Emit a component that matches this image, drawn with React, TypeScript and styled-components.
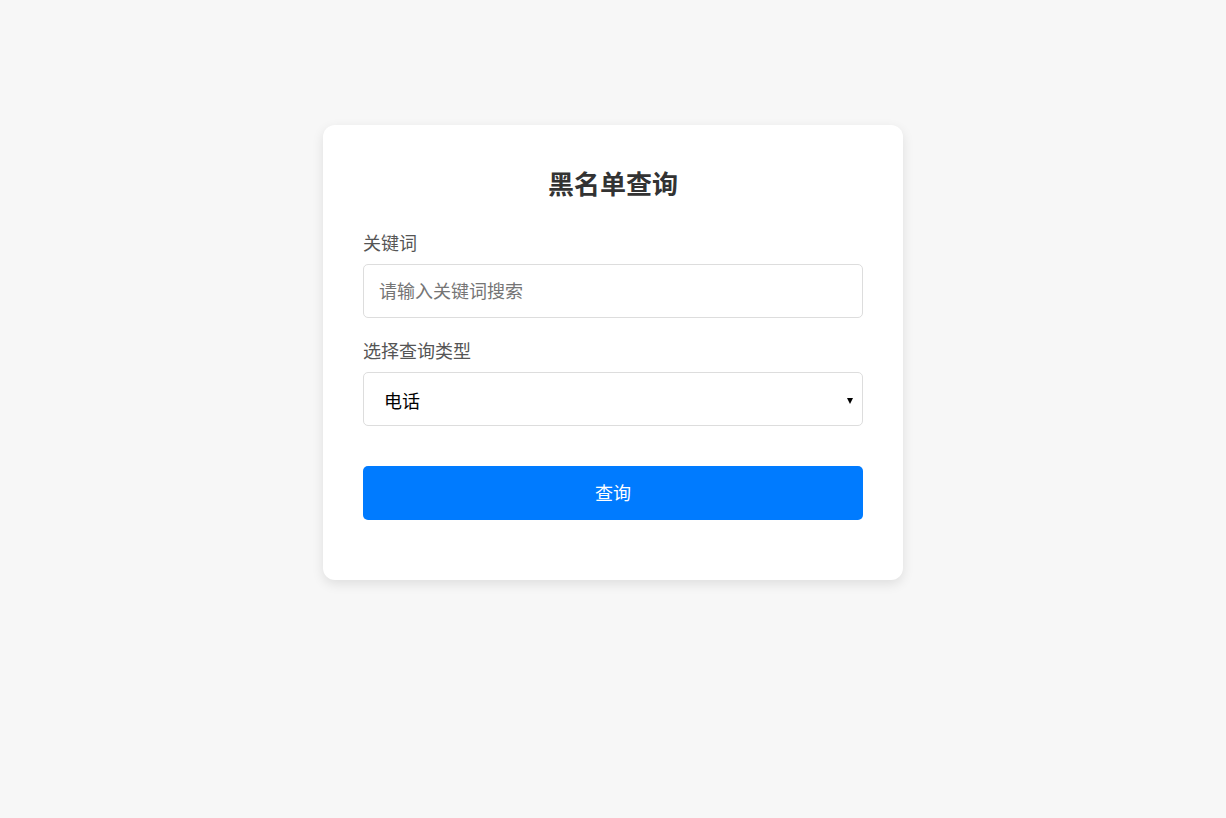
import React, { useState } from 'react';
import styled, { createGlobalStyle } from 'styled-components';

const GlobalStyle = createGlobalStyle`
  * {
    box-sizing: border-box;
  }

  body {
    margin: 0;
    background-color: #f7f7f7;
    font-family: "Noto Sans CJK SC", "Noto Sans", sans-serif;
  }
`;

const Page = styled.div`
  display: flex;
  justify-content: center;
  align-items: flex-start;
  min-height: 818px;
  padding-top: 125px;
`;

const Card = styled.div`
  width: 580px;
  padding: 40px 40px 60px;
  background-color: #fff;
  border-radius: 12px;
  box-shadow: 0 4px 12px rgba(0, 0, 0, 0.1);
`;

const Title = styled.h2`
  margin: 0 0 27px;
  text-align: center;
  font-size: 26px;
  line-height: 36px;
  font-weight: 700;
  color: #333;
`;

const FormGroup = styled.div`
  display: flex;
  flex-direction: column;
  gap: 8px;
  margin-bottom: 18px;
`;

const Label = styled.label`
  font-size: 18px;
  line-height: 28px;
  color: #555;
`;

const TextInput = styled.input`
  width: 100%;
  height: 54px;
  padding: 0 16px 3px 15px;
  border: 1px solid #ddd;
  border-radius: 5px;
  font-family: inherit;
  font-size: 18px;
  color: #333;
  outline: none;

  &::placeholder {
    color: #757575;
  }
`;

const SelectWrap = styled.div`
  position: relative;

  &::after {
    content: '';
    position: absolute;
    right: 10px;
    top: 26px;
    border-left: 3px solid transparent;
    border-right: 3px solid transparent;
    border-top: 6px solid #000;
    pointer-events: none;
  }
`;

const Select = styled.select`
  width: 100%;
  height: 54px;
  padding: 2px 24px 0 20px;
  border: 1px solid #ddd;
  border-radius: 5px;
  background-color: #fff;
  appearance: none;
  font-family: inherit;
  font-size: 18px;
  color: #000;
  outline: none;
`;

const SubmitButton = styled.button`
  width: 100%;
  height: 54px;
  margin-top: 22px;
  padding: 0 0 2px;
  border: none;
  border-radius: 5px;
  background-color: #007bff;
  color: #fff;
  font-family: inherit;
  font-size: 18px;
  cursor: pointer;

  &:hover {
    background-color: #0069d9;
  }
`;

const App: React.FC = () => {
  const [keyword, setKeyword] = useState('');
  const [type, setType] = useState('phone');

  return (
    <>
      <GlobalStyle />
      <Page>
        <Card>
          <Title>黑名单查询</Title>
          <FormGroup>
            <Label htmlFor="keyword">关键词</Label>
            <TextInput
              id="keyword"
              placeholder="请输入关键词搜索"
              value={keyword}
              onChange={(e) => setKeyword(e.target.value)}
            />
          </FormGroup>
          <FormGroup>
            <Label htmlFor="type">选择查询类型</Label>
            <SelectWrap>
              <Select id="type" value={type} onChange={(e) => setType(e.target.value)}>
                <option value="phone">电话</option>
                <option value="name">姓名</option>
                <option value="idcard">身份证</option>
              </Select>
            </SelectWrap>
          </FormGroup>
          <SubmitButton type="button">查询</SubmitButton>
        </Card>
      </Page>
    </>
  );
};

export default App;
